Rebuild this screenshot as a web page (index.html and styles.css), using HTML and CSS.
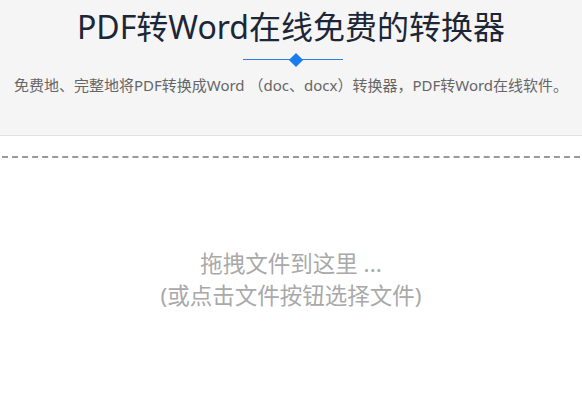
FILE: index.html
```html
<!DOCTYPE html>
<html lang="zh-CN">
<head>
<meta charset="utf-8">
<title>PDF转Word在线免费的转换器</title>
<link rel="stylesheet" href="styles.css">
</head>
<body>
<header class="hero">
  <h1 class="title">PDF转Word在线免费的转换器</h1>
  <div class="divider"><span class="diamond"></span></div>
  <p class="subtitle">免费地、完整地将PDF转换成Word （doc、docx）转换器，PDF转Word在线软件。</p>
</header>
<main class="main">
  <div class="dropzone">
    <p class="drop-text">拖拽文件到这里 ...<br>(或点击文件按钮选择文件)</p>
  </div>
</main>
</body>
</html>
```
FILE: styles.css
```css
* { box-sizing: border-box; }
html, body { margin: 0; padding: 0; background: #fff; }
body {
  font-family: "Noto Sans", "Noto Sans CJK SC", sans-serif;
  width: 582px;
  height: 400px;
  overflow: hidden;
}
.hero {
  background: #f5f5f5;
  border-bottom: 1px solid #e0e0e0;
  height: 136px;
  padding-top: 7px;
  text-align: center;
}
.title {
  margin: 0;
  font-size: 32px;
  line-height: 40px;
  font-weight: 400;
  color: #1c2636;
}
.divider {
  position: relative;
  width: 100px;
  height: 1px;
  background: #2a7fd8;
  margin: 12px 0 0 243px;
}
.diamond {
  position: absolute;
  left: 53px;
  top: 50%;
  width: 10px;
  height: 10px;
  background: #1a7cf0;
  transform: translate(-50%, -50%) rotate(45deg);
}
.subtitle {
  margin: 14px 0 0;
  font-size: 15px;
  line-height: 22px;
  color: #666;
  white-space: nowrap;
}
.main { padding-top: 20px; }
.dropzone {
  border-top: 2px dashed #999;
  margin: 0 2px;
  height: 240px;
  padding-top: 90px;
  text-align: center;
}
.drop-text {
  margin: 0;
  font-size: 22.5px;
  line-height: 32px;
  color: #a9a9a9;
}
```
